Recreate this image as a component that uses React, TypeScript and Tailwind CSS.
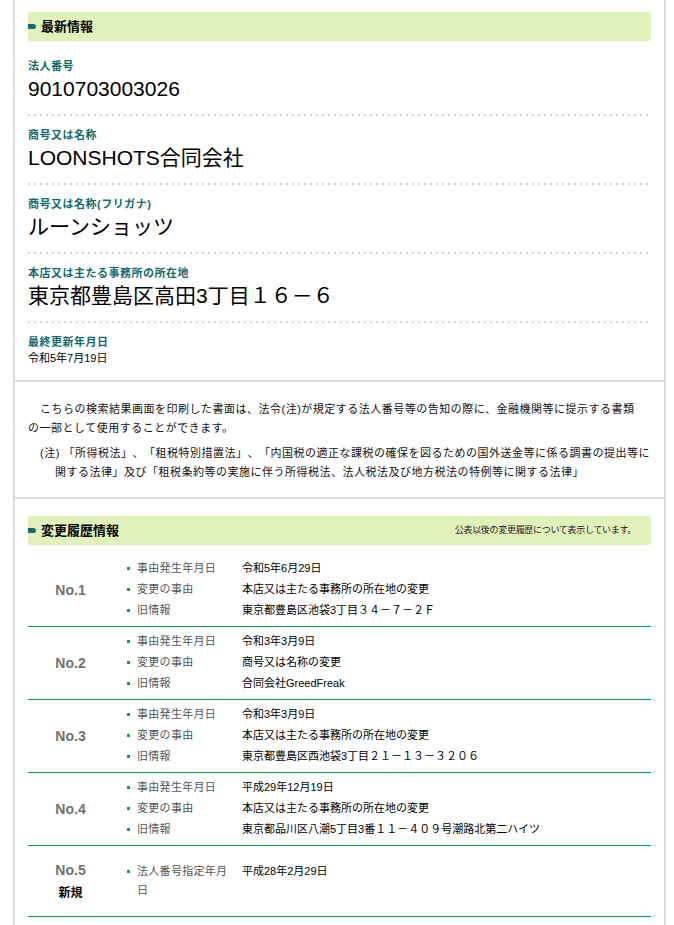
const font = "font-['Liberation_Sans','Noto_Sans_CJK_JP',sans-serif]"

type Info = { label: string; value: string }

const latest: Info[] = [
  { label: "法人番号", value: "9010703003026" },
  { label: "商号又は名称", value: "LOONSHOTS合同会社" },
  { label: "商号又は名称(フリガナ)", value: "ルーンショッツ" },
  { label: "本店又は主たる事務所の所在地", value: "東京都豊島区高田3丁目１６－６" },
]

type HistoryRow = {
  no: string
  isNew?: boolean
  items: [string, string][]
}

const history: HistoryRow[] = [
  {
    no: "No.1",
    items: [
      ["事由発生年月日", "令和5年6月29日"],
      ["変更の事由", "本店又は主たる事務所の所在地の変更"],
      ["旧情報", "東京都豊島区池袋3丁目３４－７－２Ｆ"],
    ],
  },
  {
    no: "No.2",
    items: [
      ["事由発生年月日", "令和3年3月9日"],
      ["変更の事由", "商号又は名称の変更"],
      ["旧情報", "合同会社GreedFreak"],
    ],
  },
  {
    no: "No.3",
    items: [
      ["事由発生年月日", "令和3年3月9日"],
      ["変更の事由", "本店又は主たる事務所の所在地の変更"],
      ["旧情報", "東京都豊島区西池袋3丁目２１－１３－３２０６"],
    ],
  },
  {
    no: "No.4",
    items: [
      ["事由発生年月日", "平成29年12月19日"],
      ["変更の事由", "本店又は主たる事務所の所在地の変更"],
      ["旧情報", "東京都品川区八潮5丁目3番１１－４０９号潮路北第二ハイツ"],
    ],
  },
  {
    no: "No.5",
    isNew: true,
    items: [["法人番号指定年月日", "平成28年2月29日"]],
  },
]

function SectionHeading({ title, note }: { title: string; note?: string }) {
  return (
    <div className="flex h-[29px] items-center rounded-[3px] bg-[#e1f1bc]">
      <span className="h-[5px] w-[8px] rounded-r-full bg-[#176b6b]" />
      <h2 className="ml-[5px] text-[13px] font-bold text-black">{title}</h2>
      {note && (
        <span className="ml-auto mr-[15px] text-[9px] tracking-[-0.3px] text-[#222]">{note}</span>
      )}
    </div>
  )
}

function Dots() {
  return (
    <div className="h-[2px] bg-[linear-gradient(90deg,#d4d4d4_2px,transparent_2px)] bg-[length:6px_2px] bg-repeat-x" />
  )
}

function InfoLabel({ children }: { children: string }) {
  return (
    <p className="text-[11px] font-bold leading-[14px] tracking-[0.5px] text-[#106a6a]">{children}</p>
  )
}

export default function App() {
  return (
    <div className={`${font} min-h-[925px] bg-white text-black`}>
      <div className="ml-[13px] w-[653px] border-x-2 border-[#dcdcdc]">
        {/* 最新情報 */}
        <section className="px-[13px] pt-[12px] pb-[14px]">
          <SectionHeading title="最新情報" />
          <div className="mt-[6px]">
            {latest.map((item) => (
              <div key={item.label}>
                <div className="pt-[12px] pb-[12px]">
                  <InfoLabel>{item.label}</InfoLabel>
                  <p className="mt-[3px] text-[21px] leading-[26px]">{item.value}</p>
                </div>
                <Dots />
              </div>
            ))}
            <div className="pt-[12px]">
              <InfoLabel>最終更新年月日</InfoLabel>
              <p className="mt-[1px] text-[11px] leading-[16px]">令和5年7月19日</p>
            </div>
          </div>
        </section>

        {/* 印刷に関する注記 */}
        <section className="border-t-2 border-[#dcdcdc] px-[13px] pt-[18px] pb-[15px] text-[11px] leading-[19px] tracking-[0.5px] text-[#111] [text-spacing-trim:space-all]">
          <p className="mr-[11px] indent-[12px]">
            こちらの検索結果画面を印刷した書面は、法令(注)が規定する法人番号等の告知の際に、金融機関等に提示する書類の一部として使用することができます。
          </p>
          <p className="-mr-[4px] mt-[6px] pl-[27px] -indent-[15px]">
            (注) 「所得税法」、「租税特別措置法」、「内国税の適正な課税の確保を図るための国外送金等に係る調書の提出等に関する法律」及び「租税条約等の実施に伴う所得税法、法人税法及び地方税法の特例等に関する法律」
          </p>
        </section>

        {/* 変更履歴情報 */}
        <section className="border-t-2 border-[#dcdcdc] px-[13px] pt-[17px] pb-[20px]">
          <SectionHeading title="変更履歴情報" note="公表以後の変更履歴について表示しています。" />
          <div className="mt-[9px]">
            {history.map((row) => (
              <div
                key={row.no}
                className="flex min-h-[71px] border-b border-[#009b4f] pt-[4px] pb-[5px]"
              >
                <div className="flex w-[85px] flex-col items-center justify-center">
                  <span className="text-[14px] font-bold leading-[18px] text-[#707070]">{row.no}</span>
                  {row.isNew && (
                    <span className="mt-[6px] text-[12px] font-bold leading-[16px]">新規</span>
                  )}
                </div>
                <ul className="flex flex-col justify-center text-[11px]">
                  {row.items.map(([label, value]) => (
                    <li key={label} className="flex items-start py-[1px] leading-[19px]">
                      <span className="ml-[14px] mr-[7px] mt-[8px] h-[3px] w-[3px] shrink-0 bg-[#00a651]" />
                      <span className="w-[96px] shrink-0 tracking-[0.3px] text-[#555]">{label}</span>
                      <span className="ml-[9px]">{value}</span>
                    </li>
                  ))}
                </ul>
              </div>
            ))}
          </div>
        </section>
      </div>
    </div>
  )
}
